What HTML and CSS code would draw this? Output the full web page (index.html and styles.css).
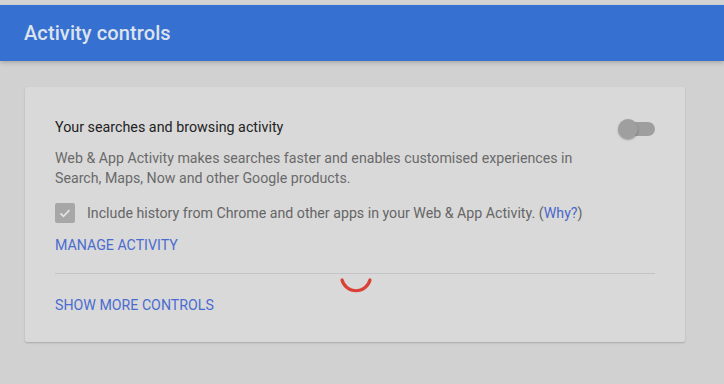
FILE: index.html
```html
<!DOCTYPE html>
<html lang="en">
<head>
<meta charset="UTF-8">
<title>Activity controls</title>
<link rel="stylesheet" href="styles.css">
</head>
<body>
<div class="top-strip"></div>
<header class="app-bar">
    <h1>Activity controls</h1>
</header>

<main class="page">
    <div class="card">
        <div class="setting-head">
            <span class="setting-title">Your searches and browsing activity</span>
            <span class="toggle"><span class="toggle-track"></span><span class="toggle-thumb"></span></span>
        </div>
        <p class="setting-desc">Web &amp; App Activity makes searches faster and enables customised experiences in Search, Maps, Now and other Google products.</p>
        <label class="check-row">
            <span class="checkbox">
                <svg width="14" height="14" viewBox="0 0 14 14"><path d="M2.5 7.3l3 3 6-6.2" fill="none" stroke="#e2e2e2" stroke-width="1.8"/></svg>
            </span>
            <span>Include history from Chrome and other apps in your Web &amp; App Activity. (<a class="why" href="#">Why?</a>)</span>
        </label>
        <a class="action" href="#">Manage activity</a>
        <div class="divider">
            <svg class="spinner" width="34" height="24" viewBox="0 0 34 24">
                <path d="M3 4 A14.5 14.5 0 0 0 31 4" fill="none" stroke="#d94136" stroke-width="3.2" stroke-linecap="round"/>
            </svg>
        </div>
        <a class="action more" href="#">Show more controls</a>
    </div>
</main>
</body>
</html>
```

FILE: styles.css
```css
body {
    margin: 0;
    font-family: Roboto, 'Liberation Sans', sans-serif;
    background-color: #d1d1d1;
    width: 724px;
    height: 384px;
    overflow: hidden;
}
.top-strip {
    height: 5px;
    background-color: #d3d3d3;
}
.app-bar {
    height: 56px;
    background-color: #3670d0;
    box-shadow: 0 2px 4px rgba(0, 0, 0, 0.18);
    display: flex;
    align-items: center;
    padding-left: 24px;
    position: relative;
}
.app-bar h1 {
    margin: 0;
    font-size: 20px;
    font-weight: 500;
    color: #dde3ee;
    letter-spacing: 0.1px;
}
.page {
    padding: 26px 39px 0 25px;
}
.card {
    background-color: #d9d9d9;
    border-radius: 2px;
    box-shadow: 0 1px 2px rgba(0, 0, 0, 0.2);
    padding: 30px 30px 25px 30px;
    height: 200px;
}
.setting-head {
    display: flex;
    justify-content: space-between;
    align-items: center;
    height: 22px;
}
.setting-title {
    font-size: 14.3px;
    color: #232323;
    margin-top: -2px;
}
.toggle {
    position: relative;
    width: 37px;
    height: 20px;
    margin-top: 2px;
}
.toggle-track {
    position: absolute;
    left: 5px;
    top: 3px;
    width: 32px;
    height: 14px;
    border-radius: 7px;
    background-color: #9e9e9e;
}
.toggle-thumb {
    position: absolute;
    left: 0;
    top: 0;
    width: 20px;
    height: 20px;
    border-radius: 50%;
    background-color: #9f9f9f;
    box-shadow: 0 1px 2px rgba(0, 0, 0, 0.3);
}
.setting-desc {
    margin: 9px 0 0 0;
    max-width: 545px;
    font-size: 14.2px;
    line-height: 20px;
    color: #6a6a6a;
}
.check-row {
    display: flex;
    align-items: center;
    margin-top: 15px;
    font-size: 14.2px;
    color: #666;
}
.checkbox {
    width: 20px;
    height: 20px;
    border-radius: 2px;
    background-color: #a7a7a7;
    display: flex;
    align-items: center;
    justify-content: center;
    margin-right: 12px;
}
.why {
    color: #4a68c9;
    text-decoration: none;
}
.action {
    display: block;
    margin-top: 14px;
    font-size: 14.2px;
    text-transform: uppercase;
    color: #4a6cd0;
    text-decoration: none;
}
.divider {
    position: relative;
    margin-top: 20px;
    border-top: 1px solid #c3c3c3;
}
.spinner {
    position: absolute;
    left: 284px;
    top: 2px;
}
.more {
    margin-top: 23px;
}
```
